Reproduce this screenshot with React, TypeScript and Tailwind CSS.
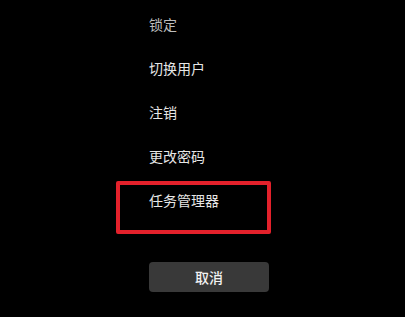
const items = ['锁定', '切换用户', '注销', '更改密码', '任务管理器'];

export default function App() {
  return (
    <div
      className="relative w-[405px] h-[317px] overflow-hidden bg-black"
      style={{ fontFamily: '"Noto Sans CJK SC", "Noto Sans", sans-serif' }}
    >
      <div className="flex flex-col pl-[149px] pt-[2px]">
        {items.map((label, i) => (
          <div
            key={label}
            className={`flex h-[44px] items-center text-[14px] leading-[20px] ${
              i === 0 ? 'text-[#bdbdbd]' : 'text-[#e6e6e6]'
            }`}
          >
            {label}
          </div>
        ))}
        <button className="mt-[40px] flex h-[30px] w-[120px] items-center justify-center rounded-[4px] bg-[#393939] text-[14px] font-medium leading-[20px] text-[#f2f2f2]">
          取消
        </button>
      </div>

      {/* red highlight annotation */}
      <div className="absolute left-[116px] top-[181px] h-[53px] w-[155px] rounded-[2px] border-[4px] border-[#e3212b]" />
    </div>
  );
}
